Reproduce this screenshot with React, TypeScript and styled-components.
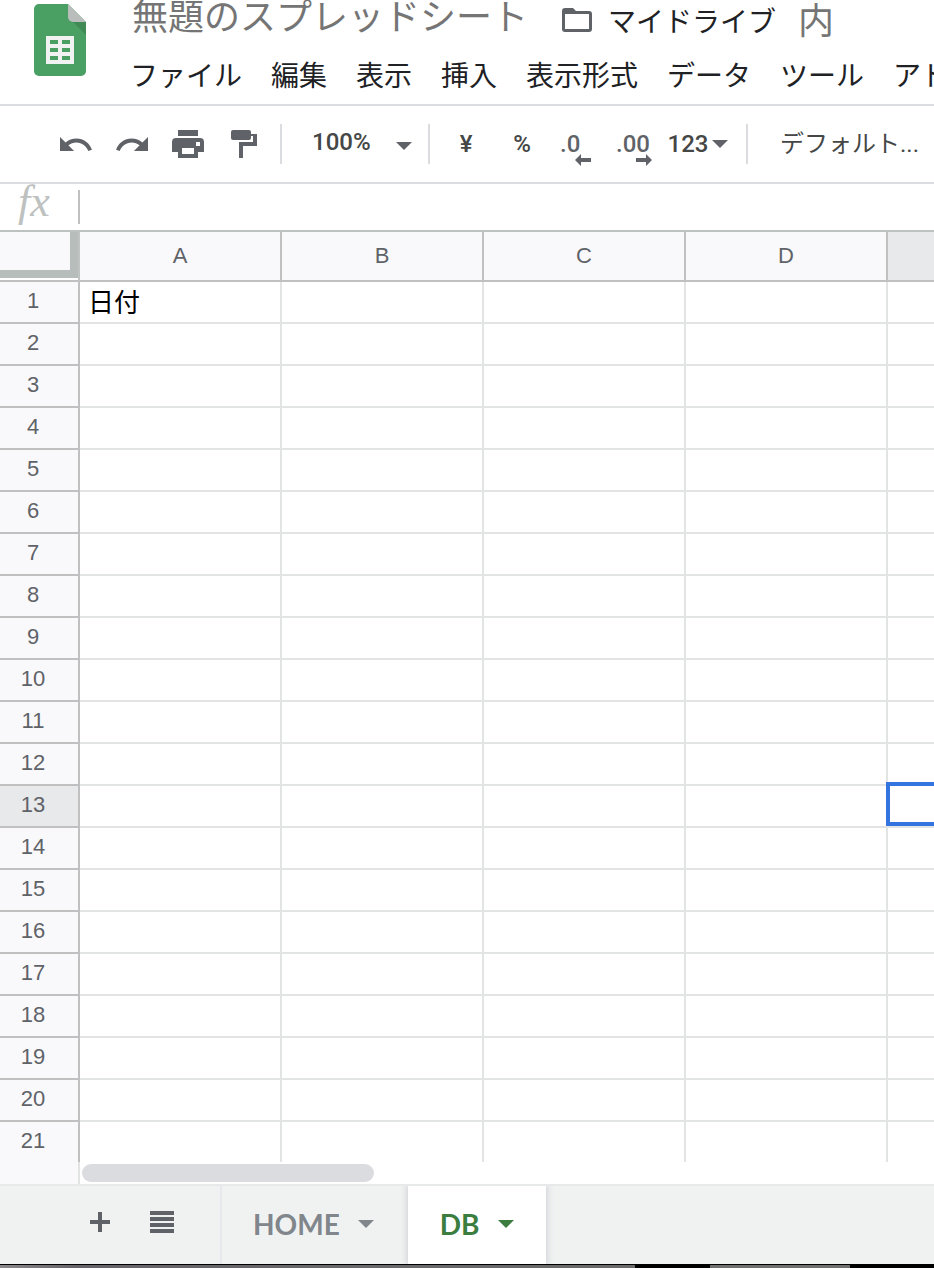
import React from "react";
import styled, { createGlobalStyle } from "styled-components";

const GlobalStyle = createGlobalStyle`
  *, *::before, *::after { box-sizing: border-box; }
  body {
    margin: 0;
    background: #fff;
    color: #202124;
    font-family: Roboto, "Noto Sans CJK JP", sans-serif;
  }
  button, input, select {
    margin: 0;
    padding: 0;
    border: 0;
    background: none;
    color: inherit;
    font: inherit;
  }
`;

const Page = styled.div`
  width: 100%;
  overflow: hidden;
`;

/* ---------- header ---------- */

const Header = styled.header`
  display: flex;
  height: 106px;
  padding-left: 34px;
  border-bottom: 2px solid #dadce0;
  overflow: hidden;
`;

const LogoLink = styled.a`
  flex: none;
  width: 52px;
  height: 72px;
  margin-top: 4px;
  margin-right: 44px;
  svg { display: block; }
`;

const HeaderMain = styled.div`
  flex: 1;
  min-width: 0;
`;

const TitleRow = styled.div`
  display: flex;
  align-items: center;
  height: 40px;
  white-space: nowrap;
`;

const TitleInput = styled.input`
  flex: none;
  width: 408px;
  height: 40px;
  padding: 0 2px 12px;
  font-size: 36px;
  line-height: 28px;
  color: #757575;
  outline: none;
`;

const FolderLink = styled.a`
  display: flex;
  align-items: center;
  gap: 16px;
  margin-left: 24px;
  font-size: 28px;
  color: #202124;
  text-decoration: none;
`;

const FolderSuffix = styled.span`
  margin-left: 22px;
  padding-bottom: 4px;
  font-size: 36px;
  color: #757575;
`;

const MenuBar = styled.nav`
  display: flex;
  gap: 29px;
  height: 64px;
`;

const MenuButton = styled.button`
  flex: none;
  height: 74px;
  font-size: 28px;
  line-height: 74px;
  white-space: nowrap;
`;

/* ---------- toolbar ---------- */

const Toolbar = styled.div`
  display: flex;
  align-items: center;
  height: 78px;
  padding-left: 48px;
  border-bottom: 2px solid #dadce0;
  color: #444746;
  font-size: 24px;
  font-weight: 500;
  overflow: hidden;
`;

const ToolButton = styled.button`
  flex: none;
  display: flex;
  align-items: center;
  justify-content: center;
  width: 56px;
  height: 40px;
`;

const DecimalButton = styled(ToolButton)`
  justify-content: flex-start;
  padding-left: 10px;
  color: #5f6368;
`;

const FormatButton = styled(ToolButton)`
  gap: 4px;
  width: 76px;
  padding-right: 4px;
  svg { color: #5f6368; }
`;

const Divider = styled.span`
  flex: none;
  width: 2px;
  height: 40px;
  margin: 0 8px;
  background: #dadce0;
`;

const ZoomBox = styled.label`
  flex: none;
  position: relative;
  display: flex;
  align-items: center;
  width: 130px;
  height: 40px;
  svg {
    position: absolute;
    right: 8px;
    top: 18px;
    color: #5f6368;
    pointer-events: none;
  }
`;

const PlainSelect = styled.select`
  appearance: none;
  width: 100%;
  height: 40px;
  padding-left: 22px;
  padding-bottom: 4px;
  outline: none;
`;

const FontSelect = styled(PlainSelect)`
  flex: none;
  width: 178px;
  padding-left: 24px;
  padding-bottom: 0;
  font-weight: 400;
`;

const DecimalLabel = styled.span<{ $overhang: number }>`
  position: relative;
  line-height: 40px;
  svg {
    position: absolute;
    right: -${(p) => p.$overhang}px;
    bottom: -2px;
  }
`;

/* ---------- formula bar ---------- */

const FormulaBar = styled.div`
  display: flex;
  height: 48px;
  border-bottom: 2px solid #bdc1bf;
`;

const FxLabel = styled.label`
  width: 78px;
  padding-left: 18px;
  font-family: "Liberation Serif", serif;
  font-size: 44px;
  font-style: italic;
  line-height: 36px;
  color: #bdc1bf;
`;

const FormulaInput = styled.input`
  flex: 1;
  height: 34px;
  margin-top: 6px;
  padding-left: 12px;
  border-left: 2px solid #c0c0c0;
  font-size: 26px;
  outline: none;
`;

/* ---------- grid ---------- */

const GridViewport = styled.div`
  overflow: hidden;
`;

const Grid = styled.table`
  width: 1090px;
  table-layout: fixed;
  border-collapse: separate;
  border-spacing: 0;
`;

const Corner = styled.th`
  width: 80px;
  height: 50px;
  padding: 0 0 2px;
  border-right: 2px solid #c0c4c3;
  border-bottom: 2px solid #c0c0c0;
`;

const SelectAll = styled.button`
  display: block;
  width: 78px;
  height: 46px;
  background: #f9f9fb;
  border-right: 8px solid #b7bdba;
  border-bottom: 8px solid #b7bdba;
`;

const HeadCell = styled.th<{ $active: boolean }>`
  background: ${(p) => (p.$active ? "#e8e9eb" : "#f9f9fb")};
  border-right: 2px solid #c0c0c0;
  border-bottom: 2px solid #c0c0c0;
  color: #5f6368;
  font-family: "Liberation Sans", Arial, sans-serif;
  font-size: 22px;
  font-weight: 400;
  line-height: 24px;
`;

const ColumnHead = styled(HeadCell)`
  width: 202px;
  height: 50px;
  padding: 0;
`;

const RowHead = styled(HeadCell)`
  height: 42px;
  padding: 0 12px 2px 0;
  tr:last-child > & {
    height: 40px;
    border-bottom: 0;
  }
`;

const Cell = styled.td`
  position: relative;
  height: 42px;
  padding: 2px 8px 0;
  border-right: 2px solid #e2e3e3;
  border-bottom: 2px solid #e2e3e3;
  color: #000;
  font-size: 26px;
  line-height: 36px;
  tr:last-child > & {
    height: 40px;
    border-bottom: 0;
  }
`;

const Selection = styled.div`
  position: absolute;
  top: -4px;
  left: -2px;
  width: 206px;
  height: 44px;
  border: 4px solid #3474e0;
`;

const ScrollRow = styled.div`
  display: flex;
  height: 22px;
`;

const ScrollGutter = styled.div`
  width: 80px;
  background: #f9f9fb;
  border-right: 2px solid #e2e3e3;
`;

const ScrollThumb = styled.div`
  width: 292px;
  height: 18px;
  margin: 2px;
  border-radius: 9px;
  background: #dadce0;
`;

/* ---------- sheet tabs ---------- */

const SheetBar = styled.footer`
  display: flex;
  height: 80px;
  padding-left: 69px;
  background: #f0f2f2;
  border-top: 2px solid #e8eaea;
`;

const SheetAction = styled.button`
  display: flex;
  align-items: center;
  justify-content: center;
  width: 62px;
  height: 72px;
  color: #5f6368;
`;

const TabGroup = styled.div`
  display: flex;
  gap: 3px;
  margin-left: 27px;
`;

const SheetTab = styled.button<{ $active?: boolean }>`
  display: flex;
  align-items: center;
  gap: 18px;
  height: 78px;
  padding: 0 ${(p) => (p.$active ? 32 : 31)}px 2px;
  background: ${(p) => (p.$active ? "#fff" : "transparent")};
  box-shadow: ${(p) => (p.$active ? "0 0 6px 2px #d4d7da" : "none")};
  clip-path: ${(p) => (p.$active ? "inset(0 -8px 0 -8px)" : "none")};
  border-left: ${(p) => (p.$active ? "0" : "2px solid #e6e8eb")};
  color: ${(p) => (p.$active ? "#3a7d3f" : "#80868b")};
  font-family: Lato, sans-serif;
  font-size: 28px;
  font-weight: 700;
`;

const WindowEdge = styled.div`
  height: 4px;
  border-top: 1px solid #000;
  background: linear-gradient(
    90deg,
    #8a888b 0,
    #66646a 8%,
    #6b6b6b 68%,
    #000 68%,
    #000 76%,
    #707070 76%,
    #707070 91%,
    #000 91%
  );
`;

/* ---------- icons ---------- */

const SheetsLogo = () => (
  <svg width="52" height="72" viewBox="0 0 52 72" aria-hidden="true">
    <path d="M5 0H34L52 18V67a5 5 0 0 1-5 5H5a5 5 0 0 1-5-5V5a5 5 0 0 1 5-5z" fill="#4a9f62" />
    <path d="M39 18H52V31z" fill="#3f8a55" />
    <path d="M34 0L52 18H39a5 5 0 0 1-5-5z" fill="#b9bdbb" />
    <path d="M12 32h28v28H12z" fill="#f1f3f2" />
    <path d="M16 36h8v4h-8zM28 36h8v4h-8zM16 44h8v4h-8zM28 44h8v4h-8zM16 52h8v4h-8zM28 52h8v4h-8z" fill="#4a9f62" />
  </svg>
);

const FolderIcon = () => (
  <svg width="30" height="24" viewBox="0 0 30 24" aria-hidden="true">
    <path
      fill="#5f6368"
      fillRule="evenodd"
      d="M3 0H11L14 3H27a3 3 0 0 1 3 3V21a3 3 0 0 1-3 3H3a3 3 0 0 1-3-3V3a3 3 0 0 1 3-3zM3 6V21H27V6z"
    />
  </svg>
);

const UndoIcon = ({ flip }: { flip?: boolean }) => (
  <svg width="32" height="14" viewBox="2 7 20.5 9" preserveAspectRatio="none" aria-hidden="true">
    <path
      fill="#5f6368"
      transform={flip ? "translate(24.5 0) scale(-1 1)" : undefined}
      d="M12.5 8c-2.65 0-5.05.99-6.9 2.6L2 7v9h9l-3.62-3.62c1.39-1.16 3.16-1.88 5.12-1.88 3.54 0 6.55 2.31 7.6 5.5l2.37-.78C21.08 11.03 17.15 8 12.5 8z"
    />
  </svg>
);

const PrintIcon = () => (
  <svg width="32" height="28" viewBox="0 0 32 28" aria-hidden="true">
    <path
      fill="#5f6368"
      fillRule="evenodd"
      d="M6 0H26V6H6zM4 8H28a4 4 0 0 1 4 4V22H26V28H6V22H0V12a4 4 0 0 1 4-4zM24 12v4h4v-4zM10 18v6H22v-6z"
    />
  </svg>
);

const PaintIcon = () => (
  <svg width="26" height="28" viewBox="0 0 26 28" aria-hidden="true">
    <path
      fill="#5f6368"
      d="M2 0H18a2 2 0 0 1 2 2V4H26V16H12V28H8V12H22V6H20V8a2 2 0 0 1-2 2H2a2 2 0 0 1-2-2V2a2 2 0 0 1 2-2z"
    />
  </svg>
);

const Caret = () => (
  <svg width="16" height="8" viewBox="0 0 16 8" aria-hidden="true">
    <path d="M0 0H16L8 8z" fill="currentColor" />
  </svg>
);

const SmallArrow = ({ right }: { right?: boolean }) => (
  <svg width="16" height="12" viewBox="0 0 16 12" aria-hidden="true">
    <path
      d="M0 6L6 0V4H16V8H6V12z"
      transform={right ? "translate(16 0) scale(-1 1)" : undefined}
      fill="currentColor"
    />
  </svg>
);

const PlusIcon = () => (
  <svg width="20" height="20" viewBox="0 0 20 20" aria-hidden="true">
    <path d="M8 0h4v8h8v4h-8v8H8v-8H0V8h8z" fill="currentColor" />
  </svg>
);

const ListIcon = () => (
  <svg width="24" height="22" viewBox="0 0 24 22" aria-hidden="true">
    <path d="M0 0h24v4H0zM0 6h24v4H0zM0 12h24v4H0zM0 18h24v4H0z" fill="currentColor" />
  </svg>
);

/* ---------- data ---------- */

const MENUS = ["ファイル", "編集", "表示", "挿入", "表示形式", "データ", "ツール", "アドオン"];
const COLUMNS = ["A", "B", "C", "D", "E"];
const ROWS = Array.from({ length: 21 }, (_, i) => i + 1);
const VALUES: Record<string, string> = { A1: "日付" };
const ACTIVE = { column: "E", row: 13 };

export default function App() {
  return (
    <Page lang="ja">
      <GlobalStyle />
      <Header>
        <LogoLink href="#" aria-label="スプレッドシート ホーム">
          <SheetsLogo />
        </LogoLink>
        <HeaderMain>
          <TitleRow>
            <TitleInput aria-label="ファイル名" defaultValue="無題のスプレッドシート" />
            <FolderLink href="#">
              <FolderIcon />
              マイドライブ
            </FolderLink>
            <FolderSuffix>内</FolderSuffix>
          </TitleRow>
          <MenuBar>
            {MENUS.map((label) => (
              <MenuButton key={label}>{label}</MenuButton>
            ))}
          </MenuBar>
        </HeaderMain>
      </Header>

      <Toolbar role="toolbar">
        <ToolButton aria-label="元に戻す"><UndoIcon /></ToolButton>
        <ToolButton aria-label="やり直す"><UndoIcon flip /></ToolButton>
        <ToolButton aria-label="印刷"><PrintIcon /></ToolButton>
        <ToolButton aria-label="書式を貼り付け"><PaintIcon /></ToolButton>
        <Divider />
        <ZoomBox>
          <PlainSelect aria-label="ズーム" defaultValue="100%">
            <option>100%</option>
          </PlainSelect>
          <Caret />
        </ZoomBox>
        <Divider />
        <ToolButton>¥</ToolButton>
        <ToolButton>%</ToolButton>
        <DecimalButton aria-label="小数点以下の桁数を減らす">
          <DecimalLabel $overhang={11}>.0<SmallArrow /></DecimalLabel>
        </DecimalButton>
        <DecimalButton aria-label="小数点以下の桁数を増やす">
          <DecimalLabel $overhang={2}>.00<SmallArrow right /></DecimalLabel>
        </DecimalButton>
        <FormatButton>
          123
          <Caret />
        </FormatButton>
        <Divider />
        <FontSelect aria-label="フォント" defaultValue="デフォルト...">
          <option>デフォルト...</option>
        </FontSelect>
      </Toolbar>

      <FormulaBar>
        <FxLabel htmlFor="formula">fx</FxLabel>
        <FormulaInput id="formula" />
      </FormulaBar>

      <GridViewport>
        <Grid>
          <thead>
            <tr>
              <Corner><SelectAll aria-label="すべて選択" /></Corner>
              {COLUMNS.map((column) => (
                <ColumnHead key={column} scope="col" $active={column === ACTIVE.column}>
                  {column}
                </ColumnHead>
              ))}
            </tr>
          </thead>
          <tbody>
            {ROWS.map((row) => (
              <tr key={row}>
                <RowHead scope="row" $active={row === ACTIVE.row}>{row}</RowHead>
                {COLUMNS.map((column) => (
                  <Cell key={column}>
                    {VALUES[column + row]}
                    {column === ACTIVE.column && row === ACTIVE.row && <Selection />}
                  </Cell>
                ))}
              </tr>
            ))}
          </tbody>
        </Grid>
      </GridViewport>
      <ScrollRow>
        <ScrollGutter />
        <ScrollThumb />
      </ScrollRow>

      <SheetBar>
        <SheetAction aria-label="シートを追加"><PlusIcon /></SheetAction>
        <SheetAction aria-label="すべてのシート"><ListIcon /></SheetAction>
        <TabGroup>
          <SheetTab>HOME<Caret /></SheetTab>
          <SheetTab $active>DB<Caret /></SheetTab>
        </TabGroup>
      </SheetBar>
      <WindowEdge />
    </Page>
  );
}
